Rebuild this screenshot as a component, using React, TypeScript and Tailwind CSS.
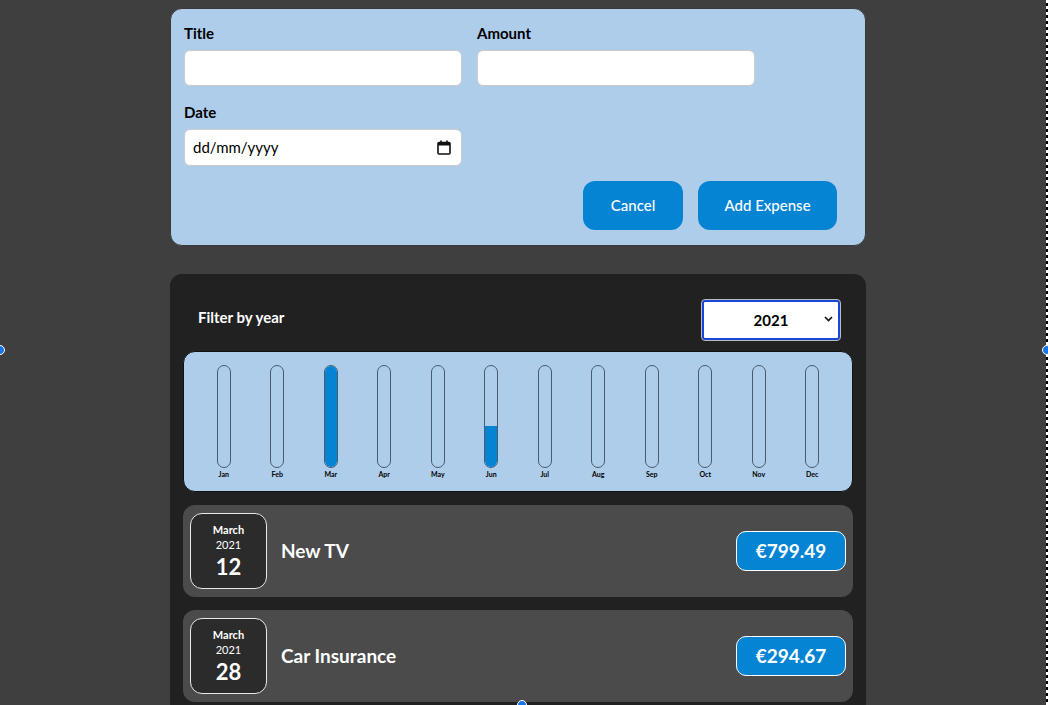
import React from "react";

type Expense = { id: string; title: string; amount: number; date: Date };

const expenses: Expense[] = [
  { id: "e1", title: "New TV", amount: 799.49, date: new Date(2021, 2, 12) },
  { id: "e2", title: "Car Insurance", amount: 294.67, date: new Date(2021, 2, 28) },
  { id: "e3", title: "New Desk (Wooden)", amount: 450, date: new Date(2021, 5, 12) },
];

const months = ["Jan", "Feb", "Mar", "Apr", "May", "Jun", "Jul", "Aug", "Sep", "Oct", "Nov", "Dec"];

// per-month totals, scaled against the biggest single month
const monthTotals = months.map((_, i) =>
  expenses.filter((e) => e.date.getMonth() === i).reduce((s, e) => s + e.amount, 0)
);
const maxTotal = Math.max(...monthTotals);

function ExpenseForm() {
  return (
    <div className="rounded-xl border border-[#3a3a3a] bg-[#aecdeb] px-[13px] pt-[14px] pb-[15px]">
      <div className="grid grid-cols-[278px_278px] gap-x-[15px] gap-y-[16px]">
        <div>
          <label className="block text-[15px] leading-5 font-bold text-black mb-[7px]">Title</label>
          <div className="h-[36px] rounded-md border border-[#ccc] bg-white" />
        </div>
        <div>
          <label className="block text-[15px] leading-5 font-bold text-black mb-[7px]">Amount</label>
          <div className="h-[36px] rounded-md border border-[#ccc] bg-white" />
        </div>
        <div>
          <label className="block text-[15px] leading-5 font-bold text-black mb-[7px]">Date</label>
          <div className="h-[37px] rounded-md border border-[#ccc] bg-white flex items-center justify-between pl-[8px] pr-[10px]">
            <span className="text-[15px] text-black">dd/mm/yyyy</span>
            <svg width="14" height="15" viewBox="0 0 14 15" fill="none">
              <rect x="1" y="2.5" width="12" height="11.5" rx="1" stroke="#111" strokeWidth="1.6" />
              <rect x="1" y="2.5" width="12" height="3" fill="#111" />
              <rect x="3.2" y="0.5" width="1.6" height="3" fill="#111" />
              <rect x="9.2" y="0.5" width="1.6" height="3" fill="#111" />
            </svg>
          </div>
        </div>
      </div>
      <div className="flex justify-end gap-[15px] mt-[15px] pr-[15px]">
        <button className="h-[49px] w-[100px] rounded-xl bg-[#0584d4] text-white text-[15px] font-medium">
          Cancel
        </button>
        <button className="h-[49px] w-[139px] rounded-xl bg-[#0584d4] text-white text-[15px] font-medium">
          Add Expense
        </button>
      </div>
    </div>
  );
}

function Chart() {
  return (
    <div className="rounded-xl border border-[#111] bg-[#aecdeb] px-[13px] pt-[13px] pb-[12px] flex">
      {months.map((m, i) => {
        const pct = maxTotal > 0 ? Math.round((monthTotals[i] / maxTotal) * 100) : 0;
        return (
          <div key={m} className="flex-1 flex flex-col items-center">
            <div className="h-[103px] w-[14px] rounded-full border border-[#4a5a6a] overflow-hidden flex flex-col justify-end">
              <div className="w-full bg-[#0584d4]" style={{ height: `${pct}%` }} />
            </div>
            <span className="mt-[1px] text-[7px] leading-[10px] font-bold text-black">{m}</span>
          </div>
        );
      })}
    </div>
  );
}

function ExpenseItem({ expense }: { expense: Expense }) {
  const month = expense.date.toLocaleString("en-US", { month: "long" });
  return (
    <div className="flex items-center rounded-xl bg-[#4b4b4b] px-[7px] py-[8px]">
      <div className="w-[77px] h-[76px] rounded-xl border border-[#e8e8e8] bg-[#2b2b2b] flex flex-col items-center justify-center text-white">
        <span className="text-[11px] leading-[14px] font-bold">{month}</span>
        <span className="text-[11px] leading-[14px] mt-[1px]">{expense.date.getFullYear()}</span>
        <span className="text-[22px] leading-[26px] mt-[2px] font-bold">{expense.date.getDate()}</span>
      </div>
      <h2 className="ml-[14px] flex-1 text-[19px] font-bold text-white">{expense.title}</h2>
      <div className="w-[110px] h-[40px] rounded-[10px] border border-white bg-[#0584d4] flex items-center justify-center text-white text-[19px] font-bold">
        €{expense.amount.toFixed(2)}
      </div>
    </div>
  );
}

export default function App() {
  return (
    <div
      className="relative h-[705px] w-[1048px] overflow-hidden bg-[#3f3f3f]"
      style={{ fontFamily: "Lato, 'Noto Sans', sans-serif" }}
    >
      <div className="w-[1036px] pt-[8px]">
        <div className="mx-auto w-[696px] flex flex-col gap-[28px]">
          <ExpenseForm />
          <div className="rounded-xl bg-[#212121] pl-[13px] pr-[13px] pt-[26px] pb-[13px]">
            <div className="flex items-center justify-between pl-[15px] pr-[13px] mb-[11px]">
              <span className="mb-[6px] text-[15px] font-bold text-white">Filter by year</span>
              <div className="relative">
                <select
                  defaultValue="2021"
                  className="appearance-none h-[40px] w-[138px] rounded-[3px] border-2 border-[#1747d8] outline outline-1 outline-[#bbb] bg-white text-center text-[15px] font-bold text-black"
                >
                  <option>2022</option>
                  <option>2021</option>
                  <option>2020</option>
                  <option>2019</option>
                </select>
                <svg className="pointer-events-none absolute right-[7px] top-[16px]" width="9" height="6" viewBox="0 0 9 6" fill="none">
                  <path d="M1 1l3.5 3.5L8 1" stroke="#111" strokeWidth="1.6" />
                </svg>
              </div>
            </div>
            <Chart />
            <div className="mt-[13px] flex flex-col gap-[13px]">
              {expenses.slice(0, 2).map((e) => (
                <ExpenseItem key={e.id} expense={e} />
              ))}
            </div>
          </div>
        </div>
      </div>

      {/* device-frame resize handles */}
      <div className="absolute right-0 top-0 h-full w-[2px] bg-[repeating-linear-gradient(to_bottom,#fff_0,#fff_3px,#000_3px,#000_6px)]" />
      <span className="absolute left-[-5px] top-[345px] h-[10px] w-[10px] rounded-full border border-white bg-[#1a73e8]" />
      <span className="absolute right-[-4px] top-[345px] h-[10px] w-[10px] rounded-full border border-white bg-[#1a73e8]" />
      <span className="absolute left-[517px] bottom-[-5px] h-[10px] w-[10px] rounded-full border border-white bg-[#1a73e8]" />
    </div>
  );
}
